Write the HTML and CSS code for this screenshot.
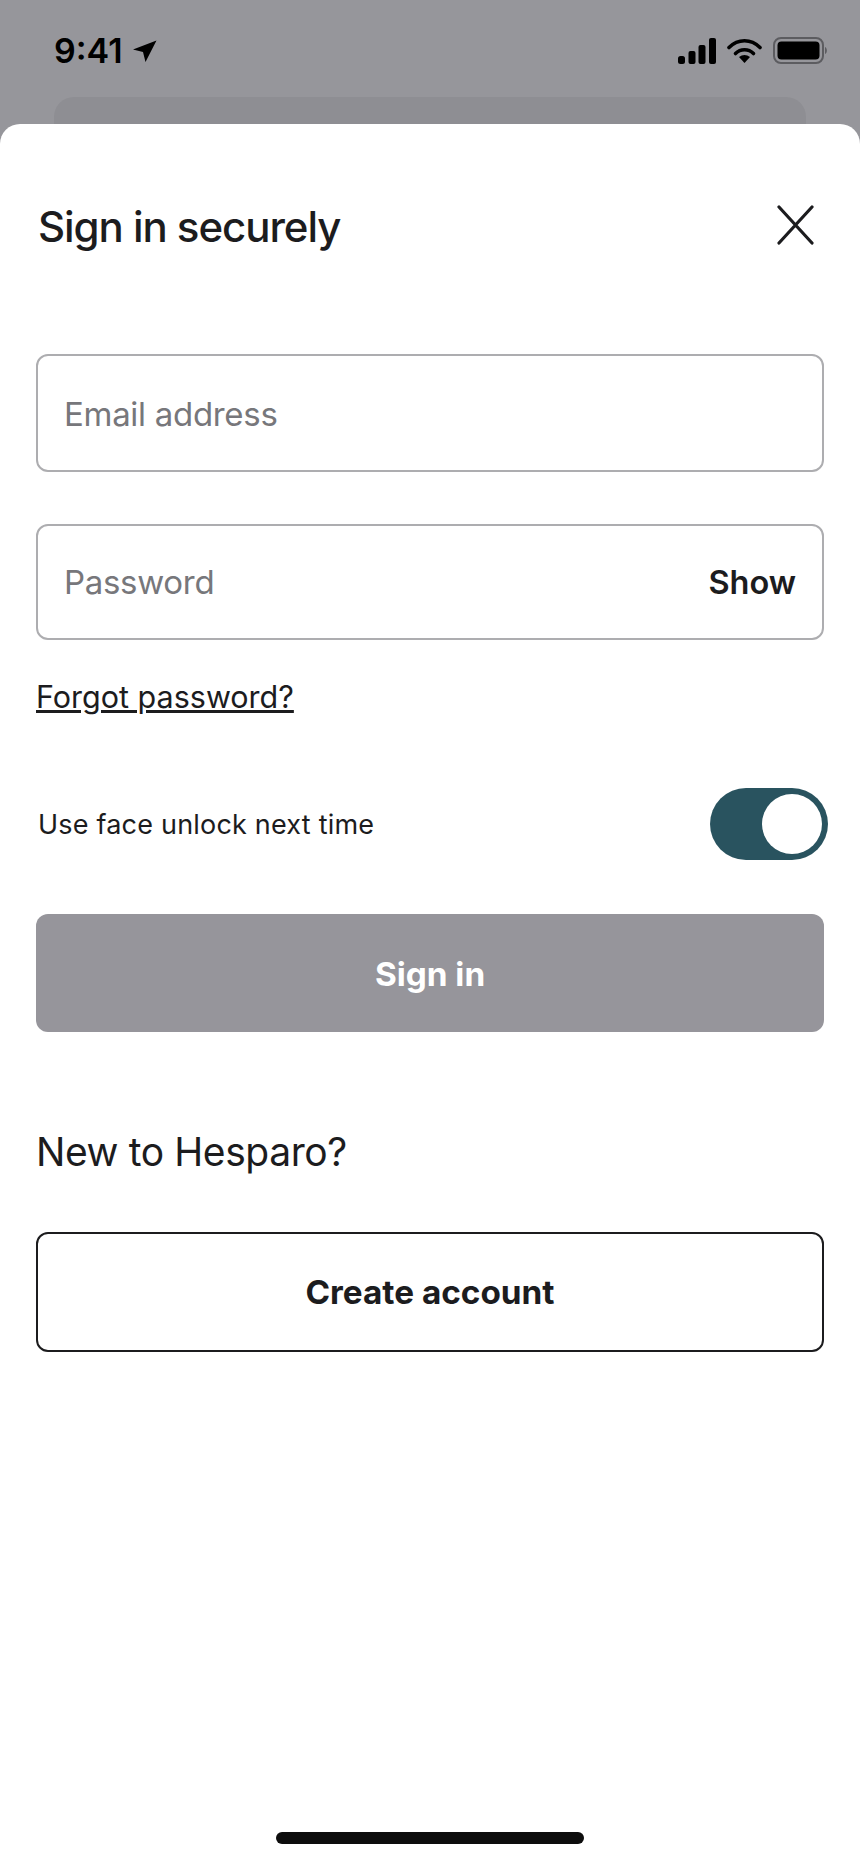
FILE: index.html
```html
<!doctype html>
<html lang="en">

<head>
    <meta charset="utf-8">
    <title>Sign in securely</title>
    <link rel="stylesheet" href="styles.css">
</head>

<body>
    <div class="status-bar">
        <div class="status-left">
            <span class="clock">9:41</span>
            <svg class="location" width="24" height="22" viewBox="0 0 24 22">
                <path d="M23.500 0.500 L0 9.500 L10 12 L12.500 22 Z" fill="#000" />
            </svg>
        </div>
        <div class="status-right">
            <svg width="38" height="26" viewBox="0 0 38 26">
                <rect x="0" y="18" width="7" height="8" rx="2.500" fill="#000" />
                <rect x="10.500" y="13" width="7" height="13" rx="2" fill="#000" />
                <rect x="20.500" y="7" width="7" height="19" rx="2" fill="#000" />
                <rect x="31" y="0" width="7" height="26" rx="2" fill="#000" />
            </svg>
            <svg width="35" height="26" viewBox="0 0 35 26">
                <path d="M2 9.500 C11 0.500 24 0.500 33 9.500" fill="none" stroke="#000" stroke-width="3.600" stroke-linecap="round" />
                <path d="M8.500 15.500 C13.500 10.500 21.500 10.500 26.500 15.500" fill="none" stroke="#000" stroke-width="3.600" stroke-linecap="round" />
                <path d="M12 19 C15.500 16.200 19.500 16.200 23 19 L17.500 25 Z" fill="#000" />
            </svg>
            <svg width="55" height="27" viewBox="0 0 55 27">
                <rect x="1" y="1" width="49" height="25" rx="7" fill="none" stroke="#5c5c60" stroke-width="2" />
                <rect x="4.500" y="4.500" width="42" height="18" rx="4" fill="#000" />
                <path d="M52 10 C54.500 11 54.500 16 52 17 Z" fill="#5c5c60" />
            </svg>
        </div>
    </div>
    <div class="peek-card"></div>

    <div class="sheet">
        <div class="sheet-head">
            <h1 class="sheet-title">Sign in securely</h1>
            <svg class="close-icon" width="37" height="40" viewBox="0 0 37 40">
                <path d="M2 2 L35 38 M35 2 L2 38" fill="none" stroke="#1c1c1e" stroke-width="3.200" stroke-linecap="round" />
            </svg>
        </div>

        <div class="field field-email">
            <span class="field-label">Email address</span>
        </div>
        <div class="field field-password">
            <span class="field-label">Password</span>
            <span class="show-btn">Show</span>
        </div>
        <a class="forgot" href="#">Forgot password?</a>

        <div class="face-row">
            <span class="face-label">Use face unlock next time</span>
            <span class="toggle"><span class="knob"></span></span>
        </div>

        <div class="btn btn-signin">Sign in</div>

        <h2 class="new-title">New to Hesparo?</h2>
        <div class="btn btn-create">Create account</div>

        <div class="home-indicator"></div>
    </div>
</body>

</html>
```
FILE: styles.css
```css
* {
    box-sizing: border-box;
}

html,
body {
    margin: 0;
    height: 100%;
}

body {
    display: flex;
    flex-direction: column;
    height: 1864px;
    overflow: hidden;
    background: #96969b;
    font-family: Inter, "Liberation Sans", sans-serif;
    color: #1c1c1e;
}

.status-bar {
    display: flex;
    justify-content: space-between;
    align-items: center;
    height: 97px;
    padding: 4px 32px 0 54px;
}

.status-left {
    display: flex;
    align-items: center;
    gap: 10px;
}

.clock {
    font-size: 34px;
    font-weight: 600;
    color: #000;
}

.status-right {
    display: flex;
    align-items: center;
    gap: 11px;
}

.peek-card {
    height: 27px;
    margin: 0 54px;
    background: #8e8e93;
    border-radius: 20px 20px 0 0;
}

.sheet {
    flex: 1;
    display: flex;
    flex-direction: column;
    padding: 0 36px;
    background: #fff;
    border-radius: 20px 20px 0 0;
}

.sheet-head {
    display: flex;
    justify-content: space-between;
    align-items: center;
    height: 78px;
    margin-top: 62px;
    margin-bottom: 90px;
    padding-left: 2px;
    padding-right: 10px;
}

.sheet-title {
    margin: 2px 0 0;
    font-size: 42px;
    font-weight: 500;
    letter-spacing: -1.05px;
}

.field {
    display: flex;
    justify-content: space-between;
    align-items: center;
    padding: 0 26px;
    background: #fff;
    border: 2px solid #adadb0;
    border-radius: 12px;
}

.field-email {
    height: 118px;
    margin-bottom: 52px;
    padding-top: 2px;
}

.field-password {
    height: 116px;
    margin-bottom: 40px;
}

.field-label {
    font-size: 33px;
    letter-spacing: -0.3px;
    color: #77777b;
}

.show-btn {
    font-size: 32.500px;
    font-weight: 600;
}

.forgot {
    align-self: flex-start;
    margin-top: -2px;
    font-size: 30.500px;
    color: #1c1c1e;
}

.face-row {
    display: flex;
    justify-content: space-between;
    align-items: center;
    margin-top: 73px;
    margin-right: -4px;
    padding-left: 2px;
}

.face-label {
    font-size: 27px;
    letter-spacing: 0.2px;
}

.toggle {
    display: flex;
    justify-content: flex-end;
    align-items: center;
    width: 118px;
    height: 72px;
    padding-right: 6px;
    background: #29535f;
    border-radius: 36px;
}

.knob {
    width: 60px;
    height: 60px;
    background: #fff;
    border-radius: 50%;
}

.btn {
    display: flex;
    justify-content: center;
    align-items: center;
    font-size: 33.300px;
    font-weight: 700;
    border-radius: 12px;
}

.btn-signin {
    height: 118px;
    margin-top: 54px;
    padding-top: 2px;
    color: #fff;
    background: #96959b;
}

.new-title {
    margin: 96px 0 0 0;
    font-size: 39px;
    font-weight: 400;
    letter-spacing: -0.4px;
}

.btn-create {
    height: 120px;
    margin-top: 57px;
    background: #fff;
    border: 2px solid #1c1c1e;
}

.home-indicator {
    align-self: center;
    width: 308px;
    height: 12px;
    margin-top: auto;
    margin-bottom: 20px;
    background: #0d0d0d;
    border-radius: 6px;
}
```
